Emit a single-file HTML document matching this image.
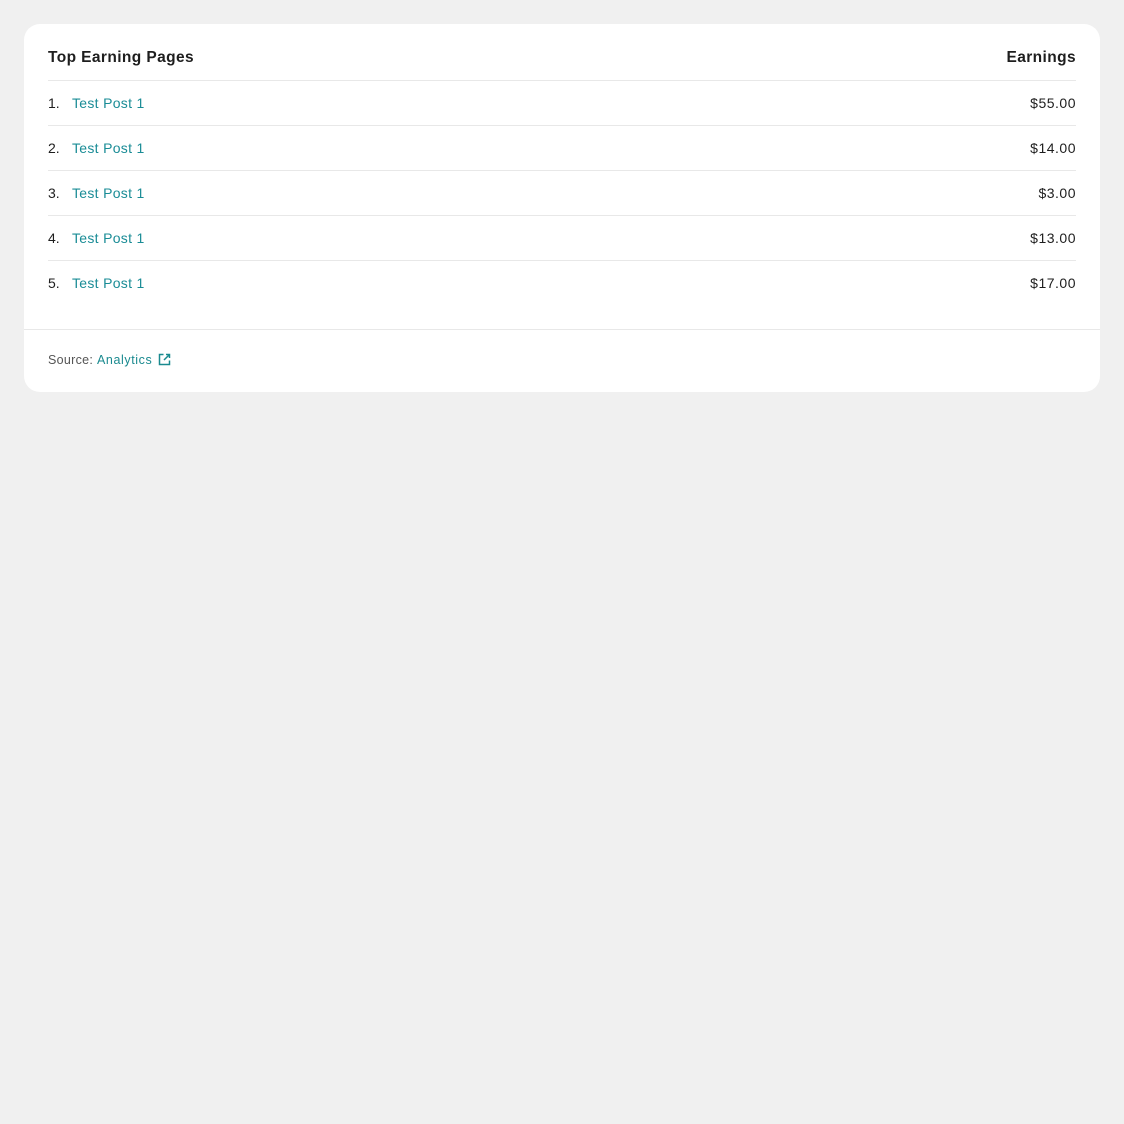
<!DOCTYPE html>
<html><head><meta charset="utf-8"><style>
*{margin:0;padding:0;box-sizing:border-box}
body{width:1124px;height:1124px;background:#f0f0f0;font-family:"Liberation Sans",sans-serif;color:#1e1e1e}
.card{position:absolute;left:24px;top:24px;width:1076px;height:368px;background:#fff;border-radius:16px}
.hdr{position:absolute;left:24px;right:24px;top:0;height:57px;border-bottom:1px solid #e8e8e8;font-weight:bold;font-size:15.5px;letter-spacing:.4px}
.hdr span{position:absolute;top:25px}
.row{position:absolute;left:24px;right:24px;height:45px;font-size:14px}
.row.b{border-bottom:1px solid #e8e8e8}
.row .n{position:absolute;left:0;top:14px}
.row .t{position:absolute;left:24px;top:14px;color:#1a8c96;letter-spacing:.3px}
.row .v{position:absolute;right:0;top:14px;letter-spacing:.5px}
.foot{position:absolute;left:0;right:0;top:305px;border-top:1px solid #e8e8e8}
.foot div{position:absolute;left:24px;top:23px;font-size:12.5px;color:#555;white-space:nowrap;letter-spacing:.3px}
.foot a{color:#1a8a8f;text-decoration:none;letter-spacing:.6px}
</style></head><body>
<div class="card">
<div class="hdr"><span style="left:0">Top Earning Pages</span><span style="right:0">Earnings</span></div>
<div class="row b" style="top:57px"><span class="n">1.</span><span class="t">Test Post 1</span><span class="v">$55.00</span></div>
<div class="row b" style="top:102px"><span class="n">2.</span><span class="t">Test Post 1</span><span class="v">$14.00</span></div>
<div class="row b" style="top:147px"><span class="n">3.</span><span class="t">Test Post 1</span><span class="v">$3.00</span></div>
<div class="row b" style="top:192px"><span class="n">4.</span><span class="t">Test Post 1</span><span class="v">$13.00</span></div>
<div class="row" style="top:237px"><span class="n">5.</span><span class="t">Test Post 1</span><span class="v">$17.00</span></div>
<div class="foot"><div>Source: <a>Analytics</a> <svg width="13" height="13" viewBox="0 0 13 13" style="vertical-align:-2px;margin-left:2px" fill="none" stroke="#1a8a8f" stroke-width="1.5"><path d="M5.5 1.5H1.5v10h10V7.5"/><path d="M8 1.5h3.5V5M11.5 1.5 6 7"/></svg></div></div>
</div>
</body></html>
